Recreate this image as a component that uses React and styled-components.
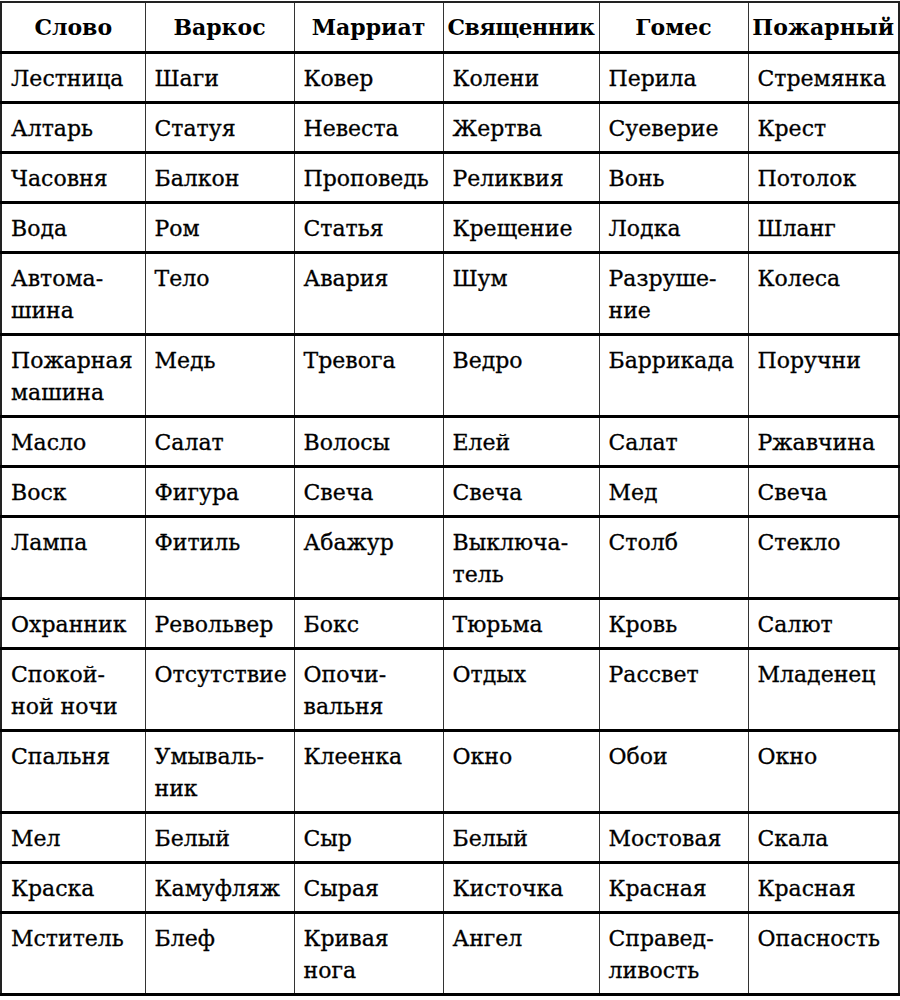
import React from "react";
import styled, { createGlobalStyle } from "styled-components";

const GlobalStyle = createGlobalStyle`
  html, body {
    margin: 0;
    padding: 0;
    background: #fff;
  }
  body {
    font-family: "DejaVu Serif", "Liberation Serif", serif;
    color: #000;
  }
`;

const Page = styled.div`
  padding: 1px 0 0 0;
  width: 899px;
`;

const Table = styled.table`
  border-collapse: collapse;
  table-layout: fixed;
  width: 898px;
  border: 2px solid #222;
  font-size: 22px;
  line-height: 32px;
`;

const HeadCell = styled.th`
  font-weight: bold;
  text-align: center;
  padding: 8px 0 8px;
  border-left: 1px solid #333;
  border-right: 1px solid #333;
  border-bottom: 3px solid #000;
  white-space: nowrap;
  letter-spacing: ${(p) => (p.$tight ? "-0.5px" : "0")};
`;

const Cell = styled.td`
  vertical-align: top;
  text-align: left;
  padding: 9px 0 6px 9px;
  border-left: 1px solid #333;
  border-right: 1px solid #333;
  border-bottom: 3px solid #000;
  white-space: nowrap;
  -webkit-text-stroke: 0.3px #000;
`;

const widths = [144, 149, 149, 156, 149, 151];

const headers = ["Слово", "Варкос", "Марриат", "Священник", "Гомес", "Пожарный"];

const rows = [
  ["Лестница", "Шаги", "Ковер", "Колени", "Перила", "Стремянка"],
  ["Алтарь", "Статуя", "Невеста", "Жертва", "Суеверие", "Крест"],
  ["Часовня", "Балкон", "Проповедь", "Реликвия", "Вонь", "Потолок"],
  ["Вода", "Ром", "Статья", "Крещение", "Лодка", "Шланг"],
  ["Автома-\nшина", "Тело", "Авария", "Шум", "Разруше-\nние", "Колеса"],
  ["Пожарная\nмашина", "Медь", "Тревога", "Ведро", "Баррикада", "Поручни"],
  ["Масло", "Салат", "Волосы", "Елей", "Салат", "Ржавчина"],
  ["Воск", "Фигура", "Свеча", "Свеча", "Мед", "Свеча"],
  ["Лампа", "Фитиль", "Абажур", "Выключа-\nтель", "Столб", "Стекло"],
  ["Охранник", "Револьвер", "Бокс", "Тюрьма", "Кровь", "Салют"],
  ["Спокой-\nной ночи", "Отсутствие", "Опочи-\nвальня", "Отдых", "Рассвет", "Младенец"],
  ["Спальня", "Умываль-\nник", "Клеенка", "Окно", "Обои", "Окно"],
  ["Мел", "Белый", "Сыр", "Белый", "Мостовая", "Скала"],
  ["Краска", "Камуфляж", "Сырая", "Кисточка", "Красная", "Красная"],
  ["Мститель", "Блеф", "Кривая\nнога", "Ангел", "Справед-\nливость", "Опасность"],
];

const Lines = ({ text }) =>
  text.split("\n").map((part, i) => (
    <React.Fragment key={i}>
      {i > 0 && <br />}
      {part}
    </React.Fragment>
  ));

export default function App() {
  return (
    <Page>
      <GlobalStyle />
      <Table>
        <colgroup>
          {widths.map((w, i) => (
            <col key={i} style={{ width: w }} />
          ))}
        </colgroup>
        <thead>
          <tr>
            {headers.map((h) => (
              <HeadCell key={h} $tight={h === "Священник"}>
                {h}
              </HeadCell>
            ))}
          </tr>
        </thead>
        <tbody>
          {rows.map((row, r) => (
            <tr key={r}>
              {row.map((c, i) => (
                <Cell key={i}>
                  <Lines text={c} />
                </Cell>
              ))}
            </tr>
          ))}
        </tbody>
      </Table>
    </Page>
  );
}
